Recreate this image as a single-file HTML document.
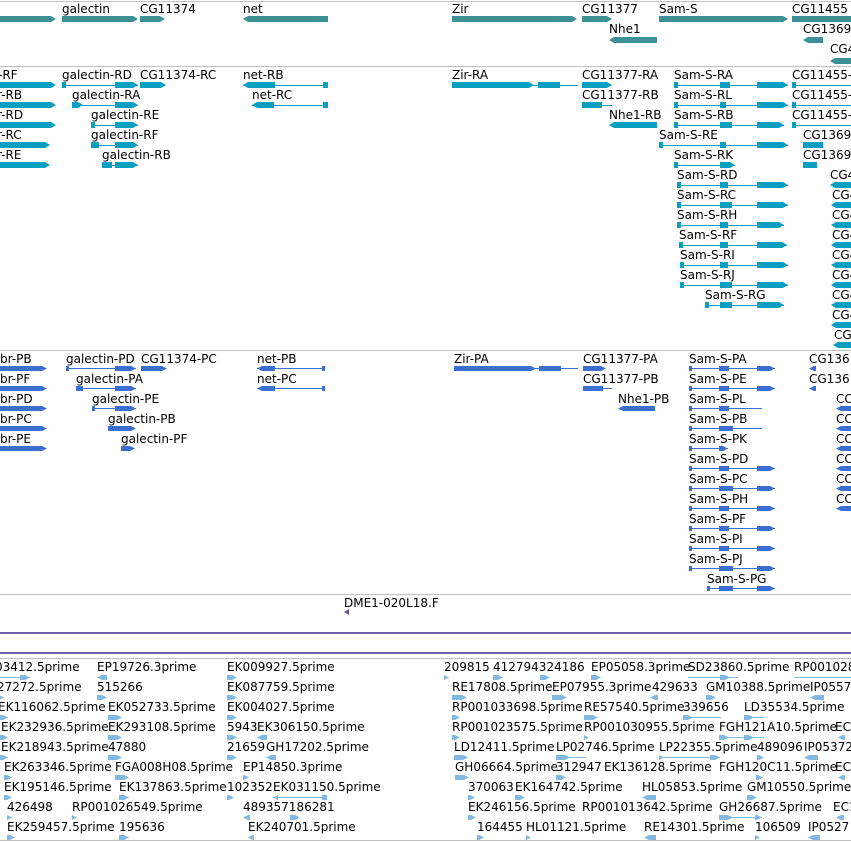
<!DOCTYPE html>
<html><head><meta charset="utf-8"><style>
html,body{margin:0;padding:0;background:#fff;}
body{width:851px;height:842px;position:relative;overflow:hidden;font-family:"DejaVu Sans","Liberation Sans",sans-serif;}
.l{position:absolute;font-size:12px;line-height:12px;letter-spacing:0;white-space:nowrap;color:#000;}
.h{position:absolute;left:0;width:851px;height:1px;background:#c0c0c0;}
.p{position:absolute;left:0;width:851px;height:2px;background:#7060a8;}
.g{position:absolute;height:6px;background:#3d9096;}
.t{position:absolute;height:6px;background:#0a9fc0;}
.tl{position:absolute;height:1px;background:#0a9fc0;}
.q{position:absolute;height:5px;background:#3a6fcf;}
.ql{position:absolute;height:1px;background:#3a6fcf;}
.e{position:absolute;height:5px;width:10px;background:#82b9e0;}
.el{position:absolute;height:1px;background:#82b9e0;}
.r{clip-path:polygon(0 0,calc(100% - 5px) 0,100% 50%,calc(100% - 5px) 100%,0 100%);}
.lf{clip-path:polygon(5px 0,100% 0,100% 100%,5px 100%,0 50%);}
</style></head><body>
<div class="h" style="top:1px"></div>
<div class="h" style="top:66px"></div>
<div class="h" style="top:350px"></div>
<div class="h" style="top:594px"></div>
<div class="p" style="top:632px"></div>
<div class="p" style="top:652px"></div>
<div class="h" style="top:658px"></div>
<div class="h" style="top:840px"></div>

<!-- gene track -->
<div class="g r" style="left:0;top:16px;width:56px"></div>
<div class="l" style="left:62px;top:3px">galectin</div><div class="g r" style="left:62px;top:16px;width:76px"></div>
<div class="l" style="left:140px;top:3px">CG11374</div><div class="g r" style="left:140px;top:16px;width:25px"></div>
<div class="l" style="left:243px;top:3px">net</div><div class="g lf" style="left:243px;top:16px;width:85px"></div>
<div class="l" style="left:452px;top:3px">Zir</div><div class="g r" style="left:452px;top:16px;width:125px"></div>
<div class="l" style="left:582px;top:3px">CG11377</div><div class="g r" style="left:582px;top:16px;width:30px"></div>
<div class="l" style="left:659px;top:3px">Sam-S</div><div class="g r" style="left:659px;top:16px;width:129px"></div>
<div class="l" style="left:792px;top:3px">CG11455</div><div class="g" style="left:792px;top:16px;width:59px"></div>
<div class="l" style="left:609px;top:23px">Nhe1</div><div class="g lf" style="left:609px;top:37px;width:48px"></div>
<div class="l" style="left:803px;top:23px">CG1369</div><div class="g lf" style="left:803px;top:37px;width:20px"></div>
<div class="l" style="left:830px;top:43px">CG4</div><div class="g lf" style="left:830px;top:58px;width:21px"></div>

<!-- transcripts -->
<div class="l" style="left:-2px;top:69px">-RF</div><div class="t r" style="left:0;top:82px;width:56px"></div>
<div class="l" style="left:-3px;top:89px">r-RB</div><div class="t r" style="left:0;top:102px;width:56px"></div>
<div class="l" style="left:-3px;top:109px">r-RD</div><div class="t r" style="left:0;top:122px;width:56px"></div>
<div class="l" style="left:-3px;top:129px">r-RC</div><div class="t r" style="left:0;top:142px;width:50px"></div>
<div class="l" style="left:-3px;top:149px">r-RE</div><div class="t r" style="left:0;top:162px;width:50px"></div>

<div class="l" style="left:62px;top:69px">galectin-RD</div><div class="tl" style="left:62px;top:85px;width:76px"></div><div class="t" style="left:62px;top:82px;width:4px"></div><div class="t r" style="left:115px;top:82px;width:23px"></div>
<div class="l" style="left:72px;top:89px">galectin-RA</div><div class="tl" style="left:72px;top:105px;width:66px"></div><div class="t r" style="left:72px;top:102px;width:11px"></div><div class="t r" style="left:115px;top:102px;width:23px"></div>
<div class="l" style="left:91px;top:109px">galectin-RE</div><div class="tl" style="left:91px;top:125px;width:47px"></div><div class="t" style="left:91px;top:122px;width:4px"></div><div class="t r" style="left:115px;top:122px;width:23px"></div>
<div class="l" style="left:91px;top:129px">galectin-RF</div><div class="tl" style="left:91px;top:145px;width:47px"></div><div class="t" style="left:91px;top:142px;width:8px"></div><div class="t r" style="left:115px;top:142px;width:23px"></div>
<div class="l" style="left:102px;top:149px">galectin-RB</div><div class="tl" style="left:102px;top:165px;width:36px"></div><div class="t" style="left:102px;top:162px;width:10px"></div><div class="t r" style="left:115px;top:162px;width:23px"></div>
<div class="l" style="left:140px;top:69px">CG11374-RC</div><div class="t r" style="left:140px;top:82px;width:26px"></div>
<div class="l" style="left:243px;top:69px">net-RB</div><div class="tl" style="left:243px;top:85px;width:85px"></div><div class="t lf" style="left:243px;top:82px;width:32px"></div><div class="t" style="left:323px;top:82px;width:5px"></div>
<div class="l" style="left:252px;top:89px">net-RC</div><div class="tl" style="left:252px;top:105px;width:76px"></div><div class="t lf" style="left:252px;top:102px;width:22px"></div><div class="t" style="left:323px;top:102px;width:5px"></div>
<div class="l" style="left:452px;top:69px">Zir-RA</div><div class="tl" style="left:452px;top:85px;width:126px"></div><div class="t r" style="left:452px;top:82px;width:82px"></div><div class="t" style="left:538px;top:82px;width:22px"></div>
<div class="l" style="left:582px;top:69px">CG11377-RA</div><div class="t r" style="left:582px;top:82px;width:30px"></div>
<div class="l" style="left:582px;top:89px">CG11377-RB</div><div class="tl" style="left:582px;top:105px;width:30px"></div><div class="t" style="left:582px;top:102px;width:20px"></div>
<div class="l" style="left:609px;top:109px">Nhe1-RB</div><div class="t lf" style="left:609px;top:122px;width:48px"></div>

<div class="l" style="left:674px;top:69px">Sam-S-RA</div><div class="tl" style="left:674px;top:85px;width:114px"></div><div class="t" style="left:674px;top:82px;width:4px"></div><div class="t" style="left:720px;top:82px;width:10px"></div><div class="t r" style="left:757px;top:82px;width:31px"></div>
<div class="l" style="left:674px;top:89px">Sam-S-RL</div><div class="tl" style="left:674px;top:105px;width:114px"></div><div class="t" style="left:674px;top:102px;width:4px"></div><div class="t" style="left:720px;top:102px;width:6px"></div><div class="t r" style="left:757px;top:102px;width:31px"></div>
<div class="l" style="left:674px;top:109px">Sam-S-RB</div><div class="tl" style="left:674px;top:125px;width:110px"></div><div class="t" style="left:674px;top:122px;width:4px"></div><div class="t" style="left:720px;top:122px;width:12px"></div><div class="t r" style="left:757px;top:122px;width:27px"></div>
<div class="l" style="left:659px;top:129px">Sam-S-RE</div><div class="tl" style="left:659px;top:145px;width:129px"></div><div class="t" style="left:659px;top:142px;width:4px"></div><div class="t" style="left:720px;top:142px;width:6px"></div><div class="t r" style="left:757px;top:142px;width:31px"></div>
<div class="l" style="left:674px;top:149px">Sam-S-RK</div><div class="tl" style="left:674px;top:165px;width:61px"></div><div class="t" style="left:674px;top:162px;width:4px"></div><div class="t r" style="left:720px;top:162px;width:15px"></div>
<div class="l" style="left:677px;top:169px">Sam-S-RD</div><div class="tl" style="left:677px;top:185px;width:111px"></div><div class="t" style="left:677px;top:182px;width:4px"></div><div class="t" style="left:720px;top:182px;width:8px"></div><div class="t r" style="left:757px;top:182px;width:31px"></div>
<div class="l" style="left:677px;top:189px">Sam-S-RC</div><div class="tl" style="left:677px;top:205px;width:111px"></div><div class="t" style="left:677px;top:202px;width:4px"></div><div class="t" style="left:720px;top:202px;width:12px"></div><div class="t r" style="left:757px;top:202px;width:31px"></div>
<div class="l" style="left:677px;top:209px">Sam-S-RH</div><div class="tl" style="left:677px;top:225px;width:107px"></div><div class="t" style="left:677px;top:222px;width:4px"></div><div class="t" style="left:720px;top:222px;width:8px"></div><div class="t r" style="left:757px;top:222px;width:27px"></div>
<div class="l" style="left:679px;top:229px">Sam-S-RF</div><div class="tl" style="left:679px;top:245px;width:108px"></div><div class="t" style="left:679px;top:242px;width:4px"></div><div class="t" style="left:720px;top:242px;width:8px"></div><div class="t r" style="left:757px;top:242px;width:30px"></div>
<div class="l" style="left:680px;top:249px">Sam-S-RI</div><div class="tl" style="left:680px;top:265px;width:108px"></div><div class="t" style="left:680px;top:262px;width:4px"></div><div class="t" style="left:720px;top:262px;width:8px"></div><div class="t r" style="left:757px;top:262px;width:31px"></div>
<div class="l" style="left:680px;top:269px">Sam-S-RJ</div><div class="tl" style="left:680px;top:285px;width:108px"></div><div class="t" style="left:680px;top:282px;width:4px"></div><div class="t" style="left:720px;top:282px;width:12px"></div><div class="t r" style="left:757px;top:282px;width:31px"></div>
<div class="l" style="left:705px;top:289px">Sam-S-RG</div><div class="tl" style="left:705px;top:305px;width:79px"></div><div class="t" style="left:705px;top:302px;width:4px"></div><div class="t" style="left:720px;top:302px;width:12px"></div><div class="t r" style="left:757px;top:302px;width:27px"></div>

<div class="l" style="left:792px;top:69px">CG11455-</div><div class="tl" style="left:792px;top:85px;width:59px"></div><div class="t" style="left:792px;top:82px;width:4px"></div>
<div class="l" style="left:792px;top:89px">CG11455-</div><div class="tl" style="left:792px;top:105px;width:59px"></div><div class="t" style="left:792px;top:102px;width:4px"></div>
<div class="l" style="left:792px;top:109px">CG11455-</div><div class="tl" style="left:792px;top:125px;width:59px"></div><div class="t" style="left:792px;top:122px;width:4px"></div>
<div class="l" style="left:803px;top:129px">CG1369</div><div class="t" style="left:803px;top:142px;width:20px"></div>
<div class="l" style="left:803px;top:149px">CG1369</div><div class="t" style="left:803px;top:162px;width:14px"></div>
<div class="l" style="left:830px;top:169px">CG4</div><div class="t lf" style="left:830px;top:182px;width:21px"></div>
<div class="l" style="left:832px;top:189px">CG4</div><div class="t lf" style="left:831px;top:202px;width:20px"></div>
<div class="l" style="left:832px;top:209px">CG4</div><div class="t lf" style="left:831px;top:222px;width:20px"></div>
<div class="l" style="left:832px;top:229px">CG4</div><div class="t lf" style="left:831px;top:242px;width:20px"></div>
<div class="l" style="left:832px;top:249px">CG4</div><div class="t lf" style="left:831px;top:262px;width:20px"></div>
<div class="l" style="left:832px;top:269px">CG4</div><div class="t lf" style="left:831px;top:282px;width:20px"></div>
<div class="l" style="left:832px;top:289px">CG4</div><div class="t lf" style="left:831px;top:302px;width:20px"></div>
<div class="l" style="left:832px;top:309px">CG4</div><div class="t lf" style="left:831px;top:322px;width:20px"></div>
<div class="l" style="left:834px;top:329px">CG4</div><div class="t lf" style="left:833px;top:342px;width:18px"></div>

<!-- proteins -->
<div class="l" style="left:0;top:353px">br-PB</div><div class="q r" style="left:0;top:366px;width:47px"></div>
<div class="l" style="left:0;top:373px">br-PF</div><div class="q r" style="left:0;top:386px;width:47px"></div>
<div class="l" style="left:0;top:393px">br-PD</div><div class="q r" style="left:0;top:406px;width:47px"></div>
<div class="l" style="left:0;top:413px">br-PC</div><div class="q r" style="left:0;top:426px;width:47px"></div>
<div class="l" style="left:0;top:433px">br-PE</div><div class="q r" style="left:0;top:446px;width:47px"></div>
<div class="l" style="left:66px;top:353px">galectin-PD</div><div class="ql" style="left:66px;top:368px;width:70px"></div><div class="q" style="left:66px;top:366px;width:3px"></div><div class="q r" style="left:115px;top:366px;width:21px"></div>
<div class="l" style="left:76px;top:373px">galectin-PA</div><div class="ql" style="left:76px;top:388px;width:60px"></div><div class="q" style="left:76px;top:386px;width:7px"></div><div class="q r" style="left:115px;top:386px;width:21px"></div>
<div class="l" style="left:92px;top:393px">galectin-PE</div><div class="ql" style="left:92px;top:408px;width:44px"></div><div class="q" style="left:92px;top:406px;width:3px"></div><div class="q r" style="left:115px;top:406px;width:21px"></div>
<div class="l" style="left:108px;top:413px">galectin-PB</div><div class="q r" style="left:108px;top:426px;width:28px"></div>
<div class="l" style="left:121px;top:433px">galectin-PF</div><div class="q r" style="left:121px;top:446px;width:14px"></div>
<div class="l" style="left:141px;top:353px">CG11374-PC</div><div class="q r" style="left:141px;top:366px;width:26px"></div>
<div class="l" style="left:257px;top:353px">net-PB</div><div class="ql" style="left:257px;top:368px;width:68px"></div><div class="q lf" style="left:257px;top:366px;width:18px"></div><div class="q" style="left:322px;top:366px;width:3px"></div>
<div class="l" style="left:257px;top:373px">net-PC</div><div class="ql" style="left:257px;top:388px;width:68px"></div><div class="q lf" style="left:257px;top:386px;width:18px"></div><div class="q" style="left:322px;top:386px;width:3px"></div>
<div class="l" style="left:454px;top:353px">Zir-PA</div><div class="ql" style="left:454px;top:368px;width:124px"></div><div class="q r" style="left:454px;top:366px;width:82px"></div><div class="q" style="left:539px;top:366px;width:22px"></div>
<div class="l" style="left:583px;top:353px">CG11377-PA</div><div class="q r" style="left:583px;top:366px;width:23px"></div>
<div class="l" style="left:583px;top:373px">CG11377-PB</div><div class="ql" style="left:583px;top:388px;width:29px"></div><div class="q" style="left:583px;top:386px;width:20px"></div>
<div class="l" style="left:618px;top:393px">Nhe1-PB</div><div class="q lf" style="left:618px;top:406px;width:37px"></div>

<div class="l" style="left:689px;top:353px">Sam-S-PA</div><div class="ql" style="left:689px;top:368px;width:86px"></div><div class="q" style="left:689px;top:366px;width:3px"></div><div class="q" style="left:719px;top:366px;width:10px"></div><div class="q r" style="left:757px;top:366px;width:18px"></div>
<div class="l" style="left:689px;top:373px">Sam-S-PE</div><div class="ql" style="left:689px;top:388px;width:86px"></div><div class="q" style="left:689px;top:386px;width:3px"></div><div class="q" style="left:719px;top:386px;width:10px"></div><div class="q r" style="left:757px;top:386px;width:18px"></div>
<div class="l" style="left:689px;top:393px">Sam-S-PL</div><div class="ql" style="left:689px;top:408px;width:73px"></div><div class="q" style="left:689px;top:406px;width:3px"></div><div class="q" style="left:719px;top:406px;width:10px"></div>
<div class="l" style="left:689px;top:413px">Sam-S-PB</div><div class="ql" style="left:689px;top:428px;width:73px"></div><div class="q" style="left:689px;top:426px;width:3px"></div><div class="q" style="left:719px;top:426px;width:14px"></div>
<div class="l" style="left:689px;top:433px">Sam-S-PK</div><div class="ql" style="left:689px;top:448px;width:39px"></div><div class="q" style="left:689px;top:446px;width:3px"></div><div class="q r" style="left:719px;top:446px;width:9px"></div>
<div class="l" style="left:689px;top:453px">Sam-S-PD</div><div class="ql" style="left:689px;top:468px;width:86px"></div><div class="q" style="left:689px;top:466px;width:3px"></div><div class="q" style="left:719px;top:466px;width:10px"></div><div class="q r" style="left:757px;top:466px;width:18px"></div>
<div class="l" style="left:689px;top:473px">Sam-S-PC</div><div class="ql" style="left:689px;top:488px;width:86px"></div><div class="q" style="left:689px;top:486px;width:3px"></div><div class="q" style="left:719px;top:486px;width:14px"></div><div class="q r" style="left:757px;top:486px;width:18px"></div>
<div class="l" style="left:689px;top:493px">Sam-S-PH</div><div class="ql" style="left:689px;top:508px;width:86px"></div><div class="q" style="left:689px;top:506px;width:3px"></div><div class="q" style="left:719px;top:506px;width:10px"></div><div class="q r" style="left:757px;top:506px;width:18px"></div>
<div class="l" style="left:689px;top:513px">Sam-S-PF</div><div class="ql" style="left:689px;top:528px;width:86px"></div><div class="q" style="left:689px;top:526px;width:3px"></div><div class="q" style="left:719px;top:526px;width:10px"></div><div class="q r" style="left:757px;top:526px;width:18px"></div>
<div class="l" style="left:689px;top:533px">Sam-S-PI</div><div class="ql" style="left:689px;top:548px;width:86px"></div><div class="q" style="left:689px;top:546px;width:3px"></div><div class="q" style="left:719px;top:546px;width:10px"></div><div class="q r" style="left:757px;top:546px;width:18px"></div>
<div class="l" style="left:689px;top:553px">Sam-S-PJ</div><div class="ql" style="left:689px;top:568px;width:86px"></div><div class="q" style="left:689px;top:566px;width:3px"></div><div class="q" style="left:719px;top:566px;width:14px"></div><div class="q r" style="left:757px;top:566px;width:18px"></div>
<div class="l" style="left:707px;top:573px">Sam-S-PG</div><div class="ql" style="left:707px;top:588px;width:68px"></div><div class="q" style="left:707px;top:586px;width:3px"></div><div class="q" style="left:719px;top:586px;width:14px"></div><div class="q r" style="left:757px;top:586px;width:18px"></div>
<div class="l" style="left:809px;top:353px">CG136</div><div class="q lf" style="left:809px;top:366px;width:7px"></div>
<div class="l" style="left:809px;top:373px">CG136</div><div class="q lf" style="left:809px;top:386px;width:7px"></div>
<div class="l" style="left:836px;top:393px">CC</div><div class="q lf" style="left:836px;top:406px;width:15px"></div>
<div class="l" style="left:836px;top:413px">CC</div><div class="q lf" style="left:836px;top:426px;width:15px"></div>
<div class="l" style="left:836px;top:433px">CC</div><div class="q lf" style="left:836px;top:446px;width:15px"></div>
<div class="l" style="left:836px;top:453px">CC</div><div class="q lf" style="left:836px;top:466px;width:15px"></div>
<div class="l" style="left:836px;top:473px">CC</div><div class="q lf" style="left:836px;top:486px;width:15px"></div>
<div class="l" style="left:836px;top:493px">CC</div><div class="q lf" style="left:836px;top:506px;width:15px"></div>

<!-- clone -->
<div class="l" style="left:344px;top:597px">DME1-020L18.F</div>
<div style="position:absolute;left:344px;top:609px;width:5px;height:6px;background:#6b52a3;clip-path:polygon(100% 0,100% 100%,0 50%)"></div>

<!-- ESTs -->
<div class="l" style="left:-5px;top:661px">03412.5prime</div><div class="el" style="left:0;top:677px;width:30px"></div><div class="e r" style="left:20px;top:675px"></div>
<div class="l" style="left:97px;top:661px">EP19726.3prime</div><div class="e lf" style="left:97px;top:675px"></div>
<div class="l" style="left:227px;top:661px">EK009927.5prime</div><div class="e r" style="left:227px;top:675px"></div>
<div class="l" style="left:444px;top:661px">209815</div><div class="e r" style="left:444px;top:675px;width:5px"></div>
<div class="l" style="left:493px;top:661px">412794324186</div><div class="e r" style="left:493px;top:675px"></div><div class="e r" style="left:540px;top:675px"></div>
<div class="l" style="left:591px;top:661px">EP05058.3prime</div><div class="e r" style="left:591px;top:675px"></div>
<div class="l" style="left:688px;top:661px">SD23860.5prime</div><div class="el" style="left:688px;top:677px;width:50px"></div><div class="e r" style="left:720px;top:675px"></div>
<div class="l" style="left:794px;top:661px">RP001028</div><div class="el" style="left:794px;top:677px;width:57px"></div>

<div class="l" style="left:-3px;top:681px">27272.5prime</div><div class="e r" style="left:0;top:695px;width:4px"></div>
<div class="l" style="left:97px;top:681px">515266</div><div class="e r" style="left:97px;top:695px"></div>
<div class="l" style="left:227px;top:681px">EK087759.5prime</div><div class="e r" style="left:227px;top:695px"></div>
<div class="l" style="left:452px;top:681px">RE17808.5prime</div><div class="e r" style="left:452px;top:695px;width:15px"></div>
<div class="l" style="left:552px;top:681px">EP07955.3prime</div><div class="e r" style="left:552px;top:695px;width:15px"></div>
<div class="l" style="left:652px;top:681px">429633</div><div class="e lf" style="left:650px;top:695px;width:8px"></div>
<div class="l" style="left:706px;top:681px">GM10388.5prime</div><div class="e r" style="left:706px;top:695px"></div>
<div class="l" style="left:810px;top:681px">IP0557</div><div class="e lf" style="left:810px;top:695px;width:14px"></div>

<div class="l" style="left:-2px;top:701px">EK116062.5prime</div><div class="e r" style="left:0;top:715px;width:8px"></div>
<div class="l" style="left:108px;top:701px">EK052733.5prime</div><div class="e r" style="left:108px;top:715px;width:14px"></div>
<div class="l" style="left:227px;top:701px">EK004027.5prime</div><div class="e r" style="left:227px;top:715px"></div>
<div class="l" style="left:452px;top:701px">RP001033698.5prime</div><div class="e r" style="left:452px;top:715px;width:8px"></div>
<div class="l" style="left:584px;top:701px">RE57540.5prime</div><div class="e r" style="left:584px;top:715px;width:14px"></div>
<div class="l" style="left:683px;top:701px">339656</div><div class="el" style="left:683px;top:717px;width:38px"></div><div class="e r" style="left:683px;top:715px"></div>
<div class="l" style="left:744px;top:701px">LD35534.5prime</div><div class="el" style="left:744px;top:717px;width:20px"></div><div class="e r" style="left:744px;top:715px"></div>

<div class="l" style="left:1px;top:721px">EK232936.5prime</div><div class="e r" style="left:0;top:735px;width:8px"></div>
<div class="l" style="left:108px;top:721px">EK293108.5prime</div><div class="e r" style="left:108px;top:735px;width:14px"></div>
<div class="l" style="left:227px;top:721px">5943</div><div class="e r" style="left:227px;top:735px"></div>
<div class="l" style="left:257px;top:721px">EK306150.5prime</div><div class="e lf" style="left:257px;top:735px"></div>
<div class="l" style="left:452px;top:721px">RP001023575.5prime</div><div class="e r" style="left:452px;top:735px;width:8px"></div>
<div class="l" style="left:584px;top:721px">RP001030955.5prime</div><div class="e r" style="left:584px;top:735px;width:5px"></div>
<div class="l" style="left:719px;top:721px">FGH121A10.5prime</div><div class="el" style="left:719px;top:737px;width:45px"></div><div class="e r" style="left:719px;top:735px"></div><div class="e r" style="left:744px;top:735px"></div>
<div class="l" style="left:835px;top:721px">EC</div><div class="e lf" style="left:838px;top:735px;width:7px"></div>

<div class="l" style="left:1px;top:741px">EK218943.5prime</div><div class="e r" style="left:0;top:755px;width:8px"></div>
<div class="l" style="left:108px;top:741px">47880</div><div class="e r" style="left:108px;top:755px;width:14px"></div>
<div class="l" style="left:227px;top:741px">21659</div><div class="e r" style="left:227px;top:755px"></div>
<div class="l" style="left:266px;top:741px">GH17202.5prime</div><div class="e lf" style="left:266px;top:755px"></div>
<div class="l" style="left:454px;top:741px">LD12411.5prime</div><div class="e r" style="left:454px;top:755px;width:14px"></div>
<div class="l" style="left:556px;top:741px">LP02746.5prime</div><div class="el" style="left:556px;top:757px;width:30px"></div><div class="e r" style="left:556px;top:755px;width:14px"></div>
<div class="l" style="left:659px;top:741px">LP22355.5prime</div><div class="el" style="left:659px;top:757px;width:60px"></div><div class="e r" style="left:659px;top:755px;width:5px"></div><div class="e r" style="left:710px;top:755px"></div>
<div class="l" style="left:757px;top:741px">489096</div><div class="e r" style="left:757px;top:755px;width:7px"></div>
<div class="l" style="left:804px;top:741px">IP05372</div><div class="e lf" style="left:804px;top:755px;width:14px"></div>

<div class="l" style="left:4px;top:761px">EK263346.5prime</div><div class="e r" style="left:4px;top:775px;width:8px"></div>
<div class="l" style="left:115px;top:761px">FGA008H08.5prime</div><div class="e r" style="left:115px;top:775px;width:14px"></div>
<div class="l" style="left:243px;top:761px">EP14850.3prime</div><div class="e r" style="left:243px;top:775px;width:6px"></div>
<div class="l" style="left:455px;top:761px">GH06664.5prime</div><div class="e r" style="left:455px;top:775px;width:14px"></div>
<div class="l" style="left:556px;top:761px">312947</div><div class="e r" style="left:556px;top:775px"></div>
<div class="l" style="left:604px;top:761px">EK136128.5prime</div>
<div class="l" style="left:719px;top:761px">FGH120C11.5prime</div><div class="e r" style="left:756px;top:775px;width:7px"></div>
<div class="l" style="left:835px;top:761px">EC</div><div class="e lf" style="left:838px;top:775px;width:7px"></div>

<div class="l" style="left:4px;top:781px">EK195146.5prime</div><div class="e r" style="left:4px;top:795px;width:8px"></div>
<div class="l" style="left:119px;top:781px">EK137863.5prime</div><div class="e r" style="left:119px;top:795px"></div>
<div class="l" style="left:227px;top:781px">102352</div><div class="e r" style="left:227px;top:795px;width:7px"></div>
<div class="l" style="left:273px;top:781px">EK031150.5prime</div><div class="el" style="left:273px;top:797px;width:54px"></div><div class="e lf" style="left:273px;top:795px;width:5px"></div><div class="e" style="left:322px;top:795px;width:5px"></div>
<div class="l" style="left:468px;top:781px">370063</div><div class="e r" style="left:468px;top:795px;width:7px"></div>
<div class="l" style="left:515px;top:781px">EK164742.5prime</div><div class="e r" style="left:515px;top:795px"></div>
<div class="l" style="left:642px;top:781px">HL05853.5prime</div><div class="e lf" style="left:642px;top:795px;width:14px"></div>
<div class="l" style="left:747px;top:781px">GM10550.5prime</div><div class="e r" style="left:747px;top:795px"></div>

<div class="l" style="left:7px;top:801px">426498</div><div class="e r" style="left:7px;top:815px;width:5px"></div>
<div class="l" style="left:72px;top:801px">RP001026549.5prime</div><div class="e r" style="left:72px;top:815px;width:5px"></div>
<div class="l" style="left:243px;top:801px">489357186281</div><div class="e lf" style="left:243px;top:815px;width:7px"></div><div class="e r" style="left:290px;top:815px"></div>
<div class="l" style="left:468px;top:801px">EK246156.5prime</div><div class="e r" style="left:468px;top:815px;width:8px"></div>
<div class="l" style="left:582px;top:801px">RP001013642.5prime</div>
<div class="l" style="left:719px;top:801px">GH26687.5prime</div><div class="el" style="left:719px;top:817px;width:43px"></div><div class="e r" style="left:719px;top:815px;width:14px"></div><div class="e r" style="left:755px;top:815px;width:7px"></div>
<div class="l" style="left:833px;top:801px">EC1</div><div class="e lf" style="left:836px;top:815px;width:8px"></div>

<div class="l" style="left:7px;top:821px">EK259457.5prime</div><div class="e r" style="left:7px;top:835px;width:8px"></div>
<div class="l" style="left:119px;top:821px">195636</div><div class="e r" style="left:119px;top:835px"></div>
<div class="l" style="left:248px;top:821px">EK240701.5prime</div><div class="e lf" style="left:248px;top:835px;width:6px"></div>
<div class="l" style="left:477px;top:821px">164455</div><div class="e r" style="left:477px;top:835px;width:7px"></div>
<div class="l" style="left:526px;top:821px">HL01121.5prime</div><div class="e r" style="left:526px;top:835px;width:5px"></div>
<div class="l" style="left:644px;top:821px">RE14301.5prime</div><div class="e lf" style="left:644px;top:835px;width:12px"></div>
<div class="l" style="left:755px;top:821px">106509</div><div class="e r" style="left:755px;top:835px;width:5px"></div>
<div class="l" style="left:808px;top:821px">IP0527</div><div class="e lf" style="left:808px;top:835px;width:12px"></div>
</body></html>
